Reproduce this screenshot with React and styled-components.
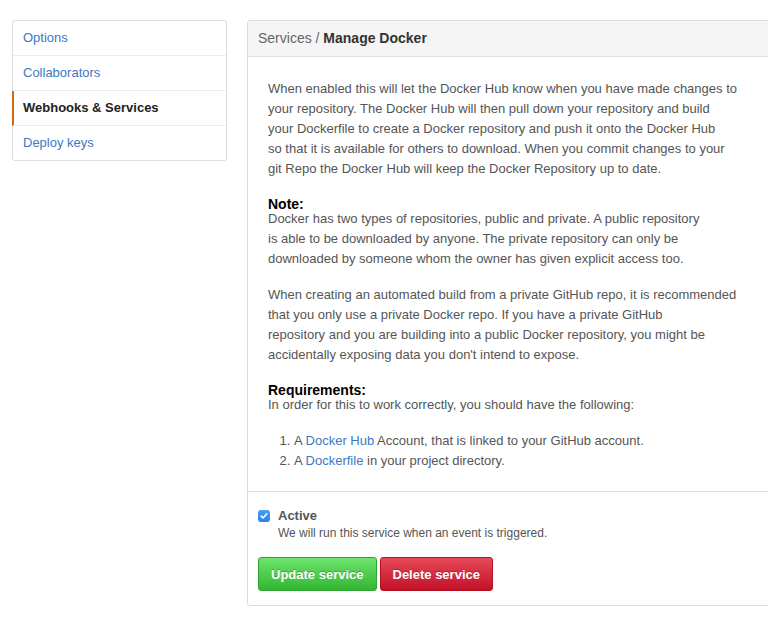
import React from 'react'
import styled, { createGlobalStyle } from 'styled-components'

const GlobalStyle = createGlobalStyle`
    html, body {
        margin: 0;
        padding: 0;
        background: #fff;
        overflow: hidden;
    }
    body {
        font-family: "Liberation Sans", Arial, Helvetica, sans-serif;
        font-size: 13px;
        color: #333;
    }
`

const Page = styled.div`
    display: flex;
    align-items: flex-start;
    padding: 20px 0 0 12px;
    width: 756px;
    overflow: hidden;
`

const Menu = styled.nav`
    width: 213px;
    flex: none;
    margin-right: 20px;
    border: 1px solid #ddd;
    border-radius: 3px;
    background: #fff;
`

const MenuItem = styled.a`
    display: block;
    height: 34px;
    line-height: 34px;
    padding: 0 10px;
    font-size: 13px;
    color: ${props => (props.$selected ? '#222' : '#4078c0')};
    font-weight: ${props => (props.$selected ? 'bold' : 'normal')};
    text-decoration: none;
    border-bottom: 1px solid #eee;
    ${props => props.$selected && `
        margin-left: -1px;
        padding-left: 9px;
        border-left: 2px solid #d26911;
    `}

    &:last-child {
        border-bottom: 0;
    }
`

const Panel = styled.section`
    width: 560px;
    flex: none;
    border: 1px solid #ddd;
    border-radius: 3px;
`

const PanelHeader = styled.div`
    height: 35px;
    line-height: 35px;
    padding: 0 10px;
    background: #f5f5f5;
    border-bottom: 1px solid #e2e2e2;
    border-radius: 3px 3px 0 0;
    font-size: 14px;
    color: #666;

    strong {
        color: #333;
    }
`

const PanelBody = styled.div`
    padding: 22px 20px 20px;
    color: #555;
    font-size: 13px;
    line-height: 20px;
    white-space: nowrap;
`

const Text = styled.p`
    margin: 0 0 ${props => props.$gap || 16}px;
`

const Heading = styled.strong`
    display: block;
    margin-top: 20px;
    font-size: 14px;
    line-height: 10px;
    color: #000;
`

const Steps = styled.ol`
    margin: 0;
    padding-left: 26px;
`

const Link = styled.a`
    color: #4078c0;
    text-decoration: none;
`

const PanelFooter = styled.div`
    border-top: 1px solid #ddd;
    padding: 15px 10px 14px;
`

const CheckRow = styled.label`
    display: flex;
    align-items: flex-start;
    gap: 8px;
`

const CheckBox = styled.span`
    width: 12px;
    height: 12px;
    margin-top: 3px;
    flex: none;
    border-radius: 3px;
    background: linear-gradient(#4a9cf7, #2a7fed);
    display: flex;
    align-items: center;
    justify-content: center;
`

const CheckText = styled.div`
    display: flex;
    flex-direction: column;
`

const CheckTitle = styled.span`
    font-size: 13px;
    line-height: 18px;
    font-weight: bold;
    color: #555;
`

const CheckNote = styled.span`
    font-size: 12px;
    line-height: 16px;
    color: #555;
`

const Actions = styled.div`
    display: flex;
    gap: 3px;
    margin-top: 16px;
`

const Button = styled.button`
    height: 34px;
    padding: 0 12px;
    font-family: inherit;
    font-size: 13px;
    font-weight: bold;
    color: #fff;
    text-shadow: 0 -1px 0 rgba(0, 0, 0, 0.25);
    border-radius: 3px;
    cursor: pointer;
    border: 1px solid ${props => (props.$danger ? '#b4141f' : '#2ea52e')};
    background: ${props =>
        props.$danger
            ? 'linear-gradient(#e64a57, #c4102a)'
            : 'linear-gradient(#6ce46c, #34b534)'};
`

const menu = ['Options', 'Collaborators', 'Webhooks & Services', 'Deploy keys']

const App = () => {
    return (
        <>
            <GlobalStyle />
            <Page>
                <Menu>
                    {menu.map(item => (
                        <MenuItem key={item} href="#" $selected={item === 'Webhooks & Services'}>
                            {item}
                        </MenuItem>
                    ))}
                </Menu>

                <Panel>
                    <PanelHeader>
                        Services / <strong>Manage Docker</strong>
                    </PanelHeader>

                    <PanelBody>
                        <Text $gap={0}>
                            When enabled this will let the Docker Hub know when you have made changes to
                            <br />
                            your repository. The Docker Hub will then pull down your repository and build
                            <br />
                            your Dockerfile to create a Docker repository and push it onto the Docker Hub
                            <br />
                            so that it is available for others to download. When you commit changes to your
                            <br />
                            git Repo the Docker Hub will keep the Docker Repository up to date.
                        </Text>

                        <Heading>Note:</Heading>
                        <Text>
                            Docker has two types of repositories, public and private. A public repository
                            <br />
                            is able to be downloaded by anyone. The private repository can only be
                            <br />
                            downloaded by someone whom the owner has given explicit access too.
                        </Text>
                        <Text $gap={0}>
                            When creating an automated build from a private GitHub repo, it is recommended
                            <br />
                            that you only use a private Docker repo. If you have a private GitHub
                            <br />
                            repository and you are building into a public Docker repository, you might be
                            <br />
                            accidentally exposing data you don't intend to expose.
                        </Text>

                        <Heading>Requirements:</Heading>
                        <Text>In order for this to work correctly, you should have the following:</Text>
                        <Steps>
                            <li>
                                A <Link href="#">Docker Hub</Link> Account, that is linked to your GitHub account.
                            </li>
                            <li>
                                A <Link href="#">Dockerfile</Link> in your project directory.
                            </li>
                        </Steps>
                    </PanelBody>

                    <PanelFooter>
                        <CheckRow>
                            <CheckBox>
                                <svg width="8" height="8" viewBox="0 0 8 8">
                                    <path
                                        d="M1.2 4.2 L3.1 6 L6.8 1.8"
                                        fill="none"
                                        stroke="#fff"
                                        strokeWidth="1.6"
                                        strokeLinecap="round"
                                        strokeLinejoin="round"
                                    />
                                </svg>
                            </CheckBox>
                            <CheckText>
                                <CheckTitle>Active</CheckTitle>
                                <CheckNote>We will run this service when an event is triggered.</CheckNote>
                            </CheckText>
                        </CheckRow>
                        <Actions>
                            <Button type="button">Update service</Button>
                            <Button type="button" $danger>
                                Delete service
                            </Button>
                        </Actions>
                    </PanelFooter>
                </Panel>
            </Page>
        </>
    )
}

export default App
